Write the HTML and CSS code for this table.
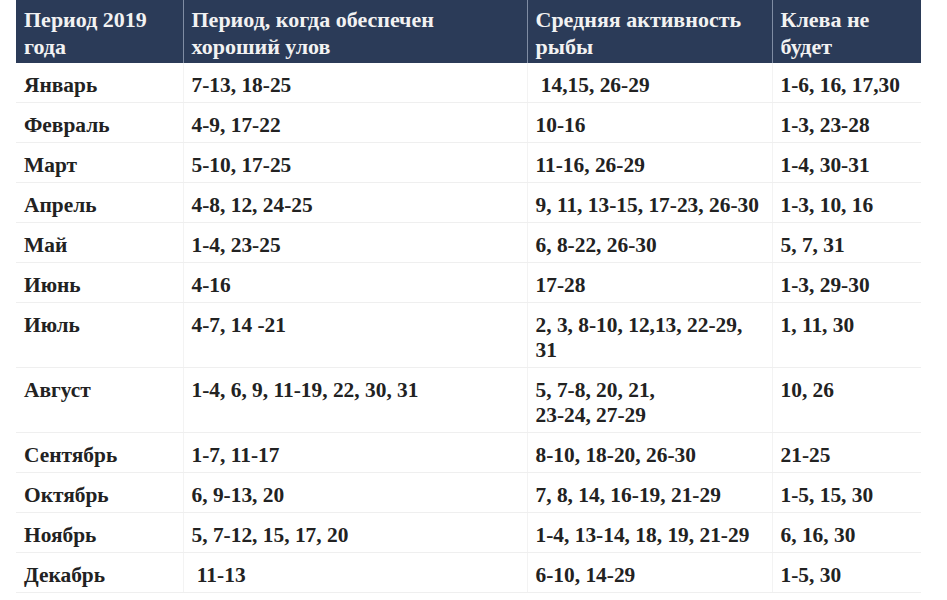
FILE: index.html
```html
<!DOCTYPE html>
<html lang="ru">
<head>
<meta charset="utf-8">
<title>Календарь клёва 2019</title>
<link rel="stylesheet" href="styles.css">
</head>
<body>
<table class="fish">
  <colgroup>
    <col class="c1"><col class="c2"><col class="c3"><col class="c4">
  </colgroup>
  <thead>
    <tr>
      <th>Период 2019 года</th>
      <th>Период, когда обеспечен хороший улов</th>
      <th>Средняя активность рыбы</th>
      <th>Клева не будет</th>
    </tr>
  </thead>
  <tbody>
    <tr><td>Январь</td><td>7-13, 18-25</td><td>&nbsp;14,15, 26-29</td><td>1-6, 16, 17,30</td></tr>
    <tr><td>Февраль</td><td>4-9, 17-22</td><td>10-16</td><td>1-3, 23-28</td></tr>
    <tr><td>Март</td><td>5-10, 17-25</td><td>11-16, 26-29</td><td>1-4, 30-31</td></tr>
    <tr><td>Апрель</td><td>4-8, 12, 24-25</td><td>9, 11, 13-15, 17-23, 26-30</td><td>1-3, 10, 16</td></tr>
    <tr><td>Май</td><td>1-4, 23-25</td><td>6, 8-22, 26-30</td><td>5, 7, 31</td></tr>
    <tr><td>Июнь</td><td>4-16</td><td>17-28</td><td>1-3, 29-30</td></tr>
    <tr><td>Июль</td><td>4-7, 14 -21</td><td>2, 3, 8-10, 12,13, 22-29, 31</td><td>1, 11, 30</td></tr>
    <tr><td>Август</td><td>1-4, 6, 9, 11-19, 22, 30, 31</td><td>5, 7-8, 20, 21,<br>23-24, 27-29</td><td>10, 26</td></tr>
    <tr><td>Сентябрь</td><td>1-7, 11-17</td><td>8-10, 18-20, 26-30</td><td>21-25</td></tr>
    <tr><td>Октябрь</td><td>6, 9-13, 20</td><td>7, 8, 14, 16-19, 21-29</td><td>1-5, 15, 30</td></tr>
    <tr><td>Ноябрь</td><td>5, 7-12, 15, 17, 20</td><td>1-4, 13-14, 18, 19, 21-29</td><td>6, 16, 30</td></tr>
    <tr><td>Декабрь</td><td>&nbsp;11-13</td><td>6-10, 14-29</td><td>1-5, 30</td></tr>
  </tbody>
</table>
</body>
</html>
```

FILE: styles.css
```css
html, body {
  margin: 0;
  padding: 0;
  background: #ffffff;
}

body {
  font-family: "Liberation Serif", "Times New Roman", serif;
  font-weight: bold;
  color: #222222;
}

.fish {
  margin-left: 16px;
  width: 905px;
  table-layout: fixed;
  border-collapse: collapse;
  border-spacing: 0;
}

.c1 { width: 167px; }
.c2 { width: 344px; }
.c3 { width: 245px; }
.c4 { width: 149px; }

.fish th {
  background: #2b3b58;
  color: #f2f2f2;
  font-size: 22px;
  line-height: 27px;
  text-align: left;
  vertical-align: top;
  padding: 6px 8px 3px 8px;
  border-left: 1px solid #7f8ca3;
  height: 54px;
}

.fish th:first-child {
  border-left: none;
}

.fish td {
  font-size: 21.4px;
  line-height: 25px;
  vertical-align: top;
  padding: 10px 8px 4px 8px;
  border-bottom: 1px solid #efefef;
  border-left: 1px solid #f3f3f3;
}

.fish td:first-child {
  border-left: none;
}
```
